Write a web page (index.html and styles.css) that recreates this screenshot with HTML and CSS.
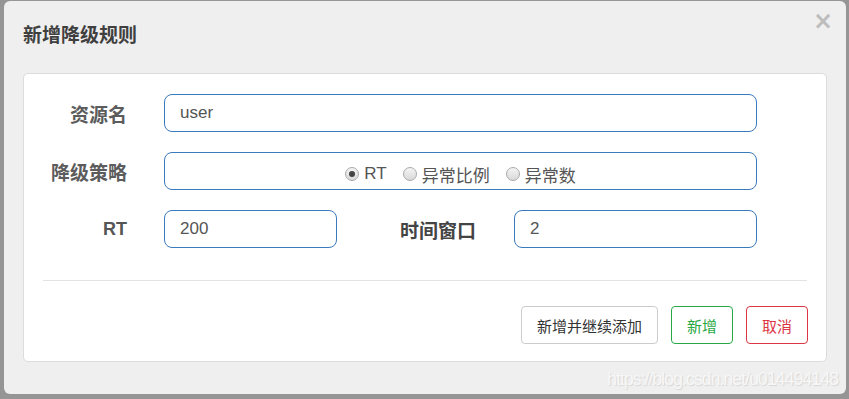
FILE: index.html
```html
<!DOCTYPE html>
<html lang="zh-CN">
<head>
    <meta charset="UTF-8">
    <title>新增降级规则</title>
    <link rel="stylesheet" href="styles.css">
</head>
<body>
    <div class="modal">
        <div class="modal-header">
            <h4 class="modal-title">新增降级规则</h4>
            <span class="close">×</span>
        </div>

        <div class="modal-body">
            <div class="form-row">
                <label class="form-label">资源名</label>
                <div class="form-input wide">user</div>
            </div>
            <div class="form-row">
                <label class="form-label">降级策略</label>
                <div class="form-input wide radio-box">
                    <span class="radio checked"></span><span class="radio-text">RT</span>
                    <span class="radio"></span><span class="radio-text">异常比例</span>
                    <span class="radio"></span><span class="radio-text">异常数</span>
                </div>
            </div>
            <div class="form-row">
                <label class="form-label rt">RT</label>
                <div class="form-input short">200</div>
                <label class="form-label second">时间窗口</label>
                <div class="form-input medium">2</div>
            </div>

            <div class="divider"></div>

            <div class="modal-buttons">
                <button class="btn btn-default">新增并继续添加</button>
                <button class="btn btn-success">新增</button>
                <button class="btn btn-danger">取消</button>
            </div>
        </div>

        <div class="watermark">https://blog.csdn.net/u014494148</div>
    </div>
</body>
</html>
```

FILE: styles.css
```css
* {
    margin: 0;
    padding: 0;
    box-sizing: border-box;
}

body {
    font-family: 'Liberation Sans', 'Noto Sans CJK SC', sans-serif;
    background-color: #959595;
    width: 849px;
    height: 399px;
    overflow: hidden;
    padding: 1px 3px 0 4px;
}

.modal {
    width: 842px;
    height: 393px;
    background: #efefef;
    border-radius: 6px;
    padding: 0 19px;
    display: flex;
    flex-direction: column;
}

.modal-header {
    height: 72px;
    display: flex;
    justify-content: space-between;
    align-items: flex-start;
}

.modal-title {
    margin-top: 20px;
    font-size: 19px;
    line-height: 26px;
    font-weight: bold;
    color: #3f3f3f;
    font-family: 'Noto Sans CJK SC', sans-serif;
}

.close {
    margin-top: 8px;
    margin-right: -6px;
    font-size: 24px;
    line-height: 24px;
    font-weight: bold;
    color: #bdbdbd;
    font-family: 'DejaVu Sans', sans-serif;
}

.modal-body {
    height: 289px;
    background: white;
    border: 1px solid #dcdcdc;
    border-radius: 5px;
    padding: 20px 19px 0 19px;
}

.form-row {
    display: flex;
    align-items: center;
    margin-bottom: 20px;
}

.form-label {
    width: 84px;
    margin-right: 37px;
    text-align: right;
    font-size: 19px;
    font-weight: bold;
    color: #5c5c5c;
    font-family: 'Noto Sans CJK SC', sans-serif;
}

.form-label.rt {
    font-family: 'Liberation Sans', sans-serif;
    font-size: 18px;
    color: #555;
}

.form-label.second {
    width: 139px;
    margin-right: 38px;
    color: #444;
}

.form-input {
    height: 38px;
    border: 1px solid #3a7bbf;
    border-radius: 8px;
    padding: 0 15px;
    display: flex;
    align-items: center;
    font-size: 17px;
    color: #555;
}

.form-input.wide {
    width: 593px;
}

.form-input.short {
    width: 173px;
}

.form-input.medium {
    width: 243px;
}

.radio-box {
    justify-content: center;
    padding-top: 6px;
}

.radio {
    width: 14px;
    height: 14px;
    border-radius: 50%;
    border: 1px solid #a9a9a9;
    background: linear-gradient(#f4f4f4, #d9d9d9);
    margin-right: 5px;
    display: flex;
    align-items: center;
    justify-content: center;
}

.radio.checked::after {
    content: "";
    width: 6px;
    height: 6px;
    border-radius: 50%;
    background: #444;
}

.radio-text {
    margin-right: 16px;
    color: #555;
    font-family: 'Liberation Sans', 'Noto Sans CJK SC', sans-serif;
}

.radio-text:last-child {
    margin-right: 0;
}

.divider {
    height: 1px;
    background: #e3e3e3;
    margin: 32px 0 24px 0;
}

.modal-buttons {
    display: flex;
    justify-content: flex-end;
    gap: 13px;
    margin-right: -1px;
    padding-top: 1px;
}

.btn {
    height: 38px;
    padding: 0 15px;
    background: white;
    border: 1px solid #ccc;
    border-radius: 4px;
    font-size: 15px;
    font-family: 'Noto Sans CJK SC', sans-serif;
    color: #333;
}

.btn-success {
    border-color: #28a745;
    color: #28a745;
}

.btn-danger {
    border-color: #dc3545;
    color: #dc3545;
}

.watermark {
    text-align: right;
    margin-right: -11px;
    padding-top: 7px;
    font-size: 18px;
    letter-spacing: -1.1px;
    color: #f7f7f7;
    text-shadow: 1px 1px 1px #d6d6d6;
}
```
